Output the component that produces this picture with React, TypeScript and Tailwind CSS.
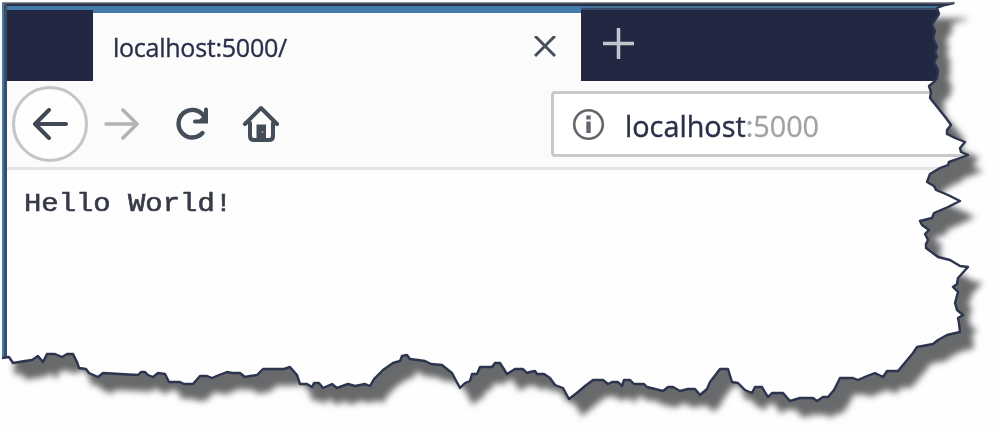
const EDGE =
  'M2 3 L954 3 L945 5 L937 8 L939 14 L935 20 L932 25 L935 31 L933 38 L937 47 L935 52 L937 57 L934 62 L938 70 L937 78 L934 82 L929 86 L931 92 L930 98 L938 108 L946 118 L951 125 L947 130 L947 134 L955 138 L965 142 L960 148 L961 152 L968 155 L960 158 L949 162 L948 165 L940 168 L930 174 L927 182 L934 186 L936 190 L948 195 L960 201 L948 207 L934 213 L932 218 L920 221 L922 225 L929 230 L925 234 L928 240 L926 244 L926 248 L938 257 L950 260 L960 266 L968 267 L958 278 L957 284 L953 287 L958 292 L955 303 L957 310 L963 315 L958 318 L959 323 L960 332 L947 335 L938 340 L933 344 L917 347 L913 353 L898 371 L887 371 L883 377 L875 373 L867 376 L858 380 L853 378 L840 378 L834 390 L828 397 L823 397 L817 401 L813 398 L800 398 L790 401 L783 393 L772 393 L768 397 L762 387 L755 387 L752 393 L745 390 L738 383 L732 382 L728 369 L720 369 L710 382 L707 389 L700 395 L695 389 L688 389 L680 391 L673 387 L668 387 L663 391 L647 387 L644 384 L634 384 L630 380 L624 380 L622 386 L618 382 L612 382 L608 384 L603 380 L593 380 L585 386 L578 392 L569 399 L563 388 L555 385 L550 378 L544 374 L537 374 L535 371 L530 372 L527 373 L523 369 L515 369 L507 374 L500 363 L495 363 L492 367 L480 367 L477 374 L472 374 L470 381 L465 383 L460 388 L452 373 L442 365 L431 364 L425 361 L410 359 L407 355 L402 356 L400 361 L393 363 L383 370 L374 379 L370 386 L365 384 L355 386 L348 384 L337 388 L332 384 L323 388 L319 383 L314 383 L312 387 L307 384 L300 384 L297 375 L290 367 L284 369 L263 369 L257 375 L250 376 L245 377 L240 373 L232 373 L227 372 L219 375 L212 378 L207 376 L200 376 L193 384 L184 384 L180 382 L169 382 L165 374 L158 373 L153 377 L148 375 L145 372 L141 372 L138 375 L120 374 L103 373 L98 377 L89 373 L86 369 L79 368 L77 362 L73 354 L67 354 L62 357 L55 354 L47 354 L43 362 L38 356 L32 360 L25 361 L19 362 L13 363 L9 357 L2 358 Z';

function TornEdge() {
  return (
    <svg className="pointer-events-none absolute inset-0" width="1000" height="425" viewBox="0 0 1000 425" aria-hidden="true">
      <defs>
        <clipPath id="outside">
          <path d={`M0 0 H1000 V425 H0 Z ${EDGE}`} clipRule="evenodd" />
        </clipPath>
        <filter id="soft" x="-5%" y="-5%" width="110%" height="115%">
          <feGaussianBlur stdDeviation="3.2" />
        </filter>
      </defs>
      <g clipPath="url(#outside)">
        <rect width="1000" height="425" fill="#fefefe" />
        <g filter="url(#soft)">
          <path d={EDGE} transform="translate(13 16)" fill="#67696b" stroke="#67696b" strokeWidth="1.5" />
        </g>
      </g>
      <path d={EDGE.replace('M2 3 L954 3', 'M954 3').replace(' Z', '')} fill="none" stroke="#2c3450" strokeWidth="2.4" strokeLinejoin="round" />
      <path d="M2 3 H955" stroke="#626772" strokeWidth="1.5" />
    </svg>
  );
}

function TabStrip() {
  return (
    <div className="flex h-[71px] bg-[#222742]">
      <div className="w-[86px] shrink-0" />
      <div className="-mt-[3px] flex h-[74px] w-[488px] shrink-0 items-center justify-between border-t-[6px] border-[#457bab] bg-[#fcfcfd] pl-5 pr-[25px]">
        <span className="origin-left scale-x-[0.965] whitespace-nowrap pb-px font-['Open_Sans',sans-serif] text-[26px] leading-none tracking-[-0.3px] text-[#2b304a] [-webkit-text-stroke:0.35px_#2b304a]">
          localhost:5000/
        </span>
        <svg width="22" height="22" viewBox="0 0 22 22" fill="none" stroke="#474e5c" strokeWidth="3" aria-hidden="true">
          <path d="M1 0 L21 20 M21 0 L1 20" />
        </svg>
      </div>
      <svg className="ml-[22px] mt-[18px]" width="31" height="31" viewBox="0 0 31 31" fill="none" stroke="#c4c7ca" strokeWidth="3.5" aria-hidden="true">
        <path d="M15.5 0 V31 M0 15.5 H31" />
      </svg>
    </div>
  );
}

function NavigationIcons() {
  return (
    <div className="flex items-center">
      <div className="flex h-[76px] w-[76px] items-center justify-center rounded-full border-[3px] border-[#c4c5c7] bg-[#fefefe]">
        <svg width="36" height="32" viewBox="0 0 36 32" fill="none" stroke="#414956" strokeWidth="4" strokeLinecap="round" strokeLinejoin="round" aria-hidden="true">
          <path d="M17 2 L3 16 L17 30 M3 16 H34" />
        </svg>
      </div>
      <svg className="ml-4" width="36" height="32" viewBox="0 0 36 32" fill="none" stroke="#b1b3b5" strokeWidth="3.5" strokeLinecap="round" strokeLinejoin="round" aria-hidden="true">
        <path d="M19 2 L33 16 L19 30 M2 16 H33" />
      </svg>
      <svg className="ml-[35px]" width="38" height="36" viewBox="0 0 38 36" fill="none" aria-hidden="true">
        <path d="M28.5 9.5 A13.8 13.8 0 1 0 27.5 27" stroke="#454d59" strokeWidth="4.4" strokeLinecap="round" />
        <path d="M31 3.5 V15.5 H20" stroke="#454d59" strokeWidth="4" strokeLinecap="round" />
        <path d="M32 6 V16 H22 Z" fill="#454d59" />
      </svg>
      <svg className="ml-[29px]" width="38" height="38" viewBox="0 0 38 38" fill="none" stroke="#454d59" strokeWidth="4" strokeLinecap="round" strokeLinejoin="round" aria-hidden="true">
        <path d="M3 19 L19 3 L35 19 M8 18 V31 Q8 35 12 35 H27 Q31 35 31 31 V18" />
        <path d="M15.5 35 V20.5 H23 V35" fill="#454d59" strokeWidth="2" strokeLinejoin="miter" />
        <circle cx="20.5" cy="27" r="0.9" stroke="none" fill="#a9abae" />
      </svg>
    </div>
  );
}

function AddressBar() {
  return (
    <div className="ml-[271px] flex h-[66px] w-[430px] shrink-0 items-center rounded-[4px] border-[3px] border-[#c8c9cb] bg-white pl-[18px]">
      <svg width="33" height="33" viewBox="0 0 33 33" fill="none" stroke="#62666d" aria-hidden="true">
        <circle cx="16.5" cy="16.5" r="14.3" strokeWidth="2.6" />
        <path d="M16.5 13.5 V25" strokeWidth="4.4" />
        <path d="M16.5 7.5 V11.5" strokeWidth="4.4" />
      </svg>
      <span className="ml-[20px] mt-[4px] origin-left scale-x-[0.96] whitespace-nowrap font-['Open_Sans',sans-serif] text-[30px] leading-none text-[#2b304a]">
        <span className="[-webkit-text-stroke:0.4px_#2b304a]">localhost</span>
        <span className="text-[#a1a2a4] [-webkit-text-stroke:0.3px_#a1a2a4]">:5000</span>
      </span>
    </div>
  );
}

export default function App() {
  return (
    <div className="relative h-[425px] w-[1000px] overflow-hidden bg-[#fefefe]">
      <div className="flex h-full pl-[2px] pt-[3px]">
        <div className="w-[2px] shrink-0 bg-[#457bab]" />
        <div className="w-[3px] shrink-0 bg-[#3b4c64]" />
        <div className="flex grow flex-col overflow-hidden">
          <div className="h-[3px] shrink-0 bg-[#292f48]" />
          <div className="flex h-[4px] shrink-0">
            <div className="w-[574px] bg-[#457bab]" />
            <div className="grow border-b-2 border-[#394b69] bg-[#477399]" />
          </div>
          <TabStrip />
          <div className="flex h-[89px] shrink-0 items-center border-b-[3px] border-[#e3e4e7] bg-[#fbfbfc] pl-[5px]">
            <NavigationIcons />
            <AddressBar />
          </div>
          <main className="grow bg-[#fefefe] pl-[17px] pt-[18px]">
            <p className="w-fit origin-left scale-x-[1.12] whitespace-nowrap font-['Liberation_Mono',monospace] text-[25.8px] leading-[34px] text-[#363a48] [-webkit-text-stroke:0.6px_#363a48]">
              Hello World!
            </p>
          </main>
        </div>
      </div>
      <TornEdge />
    </div>
  );
}
